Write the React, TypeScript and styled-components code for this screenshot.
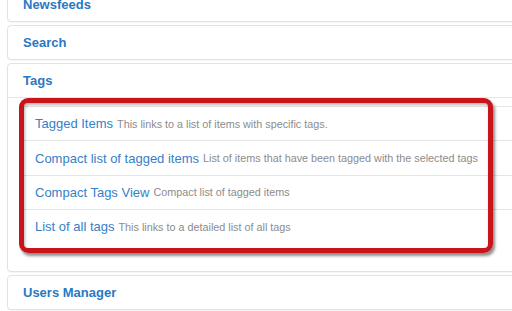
import React from "react";
import styled, { createGlobalStyle } from "styled-components";

const Global = createGlobalStyle`
  html, body {
    margin: 0;
    padding: 0;
    background: #ffffff;
    overflow: hidden;
    font-family: "Liberation Sans", Arial, sans-serif;
  }
`;

const Page = styled.div`
  width: 560px;
  margin-top: -13px;
  padding-left: 7px;
  display: flex;
  flex-direction: column;
  gap: 3px;
`;

const Panel = styled.section`
  border: 1px solid #e2e2e2;
  border-radius: 4px;
  background: #fff;
  box-shadow: 0 1px 1px rgba(0, 0, 0, 0.04);
`;

const PanelHeading = styled.div<{ $open?: boolean }>`
  padding: 9px 15px;
  line-height: 15px;
  font-size: 13px;
  font-weight: bold;
  color: #2a78c2;
  border-bottom: ${(p) => (p.$open ? "1px solid #e4e4e4" : "none")};
`;

const PanelBody = styled.div`
  padding: 8px 0 27px 14px;
`;

const ListGroup = styled.div`
  position: relative;
  display: flex;
  flex-direction: column;
`;

const Row = styled.div`
  height: 34.4px;
  box-sizing: border-box;
  border-top: 1px solid #e6e6e6;
  display: flex;
  align-items: center;
  padding-left: 13px;
  white-space: nowrap;
  &:last-of-type {
    height: 35.4px;
    border-bottom: 1px solid #e6e6e6;
  }
`;

const Link = styled.span`
  font-size: 13px;
  color: #3580c8;
`;

const Desc = styled.span`
  font-size: 10.8px;
  color: #8c8c8c;
  margin-left: 4px;
`;

const Highlight = styled.div`
  position: absolute;
  left: -3px;
  top: -8px;
  width: 474px;
  height: 155px;
  box-sizing: border-box;
  border: 5px solid #c8141a;
  border-radius: 9px;
  box-shadow: 2px 3px 3px rgba(0, 0, 0, 0.45),
    inset 1px 2px 3px rgba(0, 0, 0, 0.3);
  pointer-events: none;
`;

const items = [
  { title: "Tagged Items", desc: "This links to a list of items with specific tags." },
  {
    title: "Compact list of tagged items",
    desc: "List of items that have been tagged with the selected tags",
  },
  { title: "Compact Tags View", desc: "Compact list of tagged items" },
  { title: "List of all tags", desc: "This links to a detailed list of all tags" },
];

export default function App() {
  return (
    <>
      <Global />
      <Page>
        <Panel>
          <PanelHeading>Newsfeeds</PanelHeading>
        </Panel>
        <Panel>
          <PanelHeading>Search</PanelHeading>
        </Panel>
        <Panel>
          <PanelHeading $open>Tags</PanelHeading>
          <PanelBody>
            <ListGroup>
              {items.map((it) => (
                <Row key={it.title}>
                  <Link>{it.title}</Link>
                  <Desc>{it.desc}</Desc>
                </Row>
              ))}
              <Highlight />
            </ListGroup>
          </PanelBody>
        </Panel>
        <Panel>
          <PanelHeading>Users Manager</PanelHeading>
        </Panel>
        <Panel>
          <PanelHeading>&nbsp;</PanelHeading>
        </Panel>
      </Page>
    </>
  );
}
